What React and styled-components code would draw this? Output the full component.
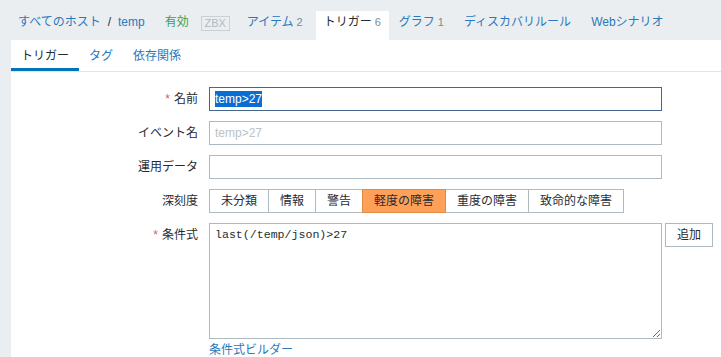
import styled, { createGlobalStyle } from "styled-components";

const GlobalStyle = createGlobalStyle`
    body {
        margin: 0;
        background: #ebeef0;
        font-family: "Liberation Sans", "Noto Sans CJK JP", sans-serif;
        font-size: 12px;
        color: #1f2c33;
    }
`
const Page = styled.div`
    width: 721px;
    height: 357px;
    overflow: hidden;
`
const TopNav = styled.nav`
    display: flex;
    align-items: flex-start;
    height: 40px;
    padding: 11px 0 0 8px;
    box-sizing: border-box;
`
const NavItem = styled.div`
    display: flex;
    align-items: baseline;
    height: 29px;
    box-sizing: border-box;
    padding: 4px ${p => (p.$active ? "8px" : "10px")} 0;
    margin-left: ${p => (p.$active ? "3px" : "0")};
    line-height: 14px;
    white-space: nowrap;
    background: ${p => (p.$active ? "#ffffff" : "transparent")};
    color: ${p => (p.$active ? "#1f2c33" : "#2a78be")};
`
const Sep = styled.span`
    color: #1f2c33;
    margin: 0 7px;
`
const Status = styled.span`
    color: #429e47;
`
const Badge = styled.span`
    display: inline-block;
    margin: 5px 7px 0 2px;
    width: 29px;
    height: 15px;
    box-sizing: border-box;
    border: 1px solid #c9d1d5;
    color: #aebbc2;
    font-size: 11px;
    line-height: 13px;
    text-align: center;
`
const Count = styled.span`
    color: #768d99;
    font-size: 11px;
    margin-left: 3px;
`
const Panel = styled.div`
    margin-left: 11px;
    background: #ffffff;
    height: 317px;
`
const TabBar = styled.div`
    display: flex;
    border-bottom: 1px solid #dfe4e7;
`
const Tab = styled.div`
    height: 31px;
    box-sizing: border-box;
    padding: 5px 10px 0;
    line-height: 23px;
    border-bottom: 3px solid ${p => (p.$active ? "#0275b8" : "transparent")};
    color: ${p => (p.$active ? "#1f2c33" : "#2a78be")};
`
const Form = styled.div`
    display: grid;
    grid-template-columns: 187px 453px auto;
    column-gap: 11px;
    row-gap: 10px;
    padding-top: 15px;
    align-items: start;
`
const Label = styled.div`
    text-align: right;
    line-height: 24px;
    white-space: nowrap;
`
const Req = styled.span`
    color: #e45959;
    margin-right: 4px;
`
const Field = styled.div`
    grid-column: 2;
    height: 24px;
    box-sizing: border-box;
    border: 1px solid ${p => (p.$focused ? "#46668f" : "#acbbc2")};
    padding: 0 5px;
    line-height: 22px;
    color: ${p => (p.$placeholder ? "#b9c3c8" : "#1f2c33")};
`
const Selected = styled.span`
    background: #0a6ed1;
    color: #ffffff;
    padding: 1px 0;
`
const SeverityGroup = styled.div`
    display: flex;
    grid-column: 2 / 4;
`
const SevButton = styled.div`
    height: 24px;
    box-sizing: border-box;
    padding: 0 11px;
    margin-left: -1px;
    line-height: 22px;
    border: 1px solid ${p => (p.$selected ? "#e08a45" : "#acbbc2")};
    background: ${p => (p.$selected ? "#ffa059" : "#ffffff")};
    position: relative;
    z-index: ${p => (p.$selected ? 1 : 0)};
    &:first-child { margin-left: 0; }
`
const ExprCell = styled.div`
    display: flex;
    flex-direction: column;
`
const Expr = styled.textarea`
    width: 453px;
    height: 116px;
    box-sizing: border-box;
    border: 1px solid #acbbc2;
    padding: 4px 5px;
    margin: 0;
    font-family: "Liberation Mono", monospace;
    font-size: 11.6px;
    line-height: 14px;
    color: #1f2c33;
    resize: vertical;
    outline: none;
`
const Link = styled.span`
    color: #2a78be;
    margin-top: 3px;
    line-height: 16px;
`
const AddButton = styled.div`
    justify-self: start;
    margin-left: -8px;
    height: 24px;
    box-sizing: border-box;
    padding: 0 11px;
    border: 1px solid #acbbc2;
    line-height: 22px;
    background: #ffffff;
`

const severities = ["未分類", "情報", "警告", "軽度の障害", "重度の障害", "致命的な障害"]

function App() {
    return (
        <Page>
            <GlobalStyle />
            <TopNav>
                <NavItem>
                    すべてのホスト<Sep>/</Sep>temp
                </NavItem>
                <NavItem><Status>有効</Status></NavItem>
                <Badge>ZBX</Badge>
                <NavItem>アイテム<Count>2</Count></NavItem>
                <NavItem $active>トリガー<Count>6</Count></NavItem>
                <NavItem>グラフ<Count>1</Count></NavItem>
                <NavItem>ディスカバリルール</NavItem>
                <NavItem>Webシナリオ</NavItem>
            </TopNav>
            <Panel>
                <TabBar>
                    <Tab $active>トリガー</Tab>
                    <Tab>タグ</Tab>
                    <Tab>依存関係</Tab>
                </TabBar>
                <Form>
                    <Label><Req>*</Req>名前</Label>
                    <Field $focused><Selected>temp&gt;27</Selected></Field>
                    <span />

                    <Label>イベント名</Label>
                    <Field $placeholder>temp&gt;27</Field>
                    <span />

                    <Label>運用データ</Label>
                    <Field />
                    <span />

                    <Label>深刻度</Label>
                    <SeverityGroup>
                        {severities.map((s, i) => (
                            <SevButton key={s} $selected={i === 3}>{s}</SevButton>
                        ))}
                    </SeverityGroup>

                    <Label><Req>*</Req>条件式</Label>
                    <ExprCell>
                        <Expr defaultValue="last(/temp/json)>27" spellCheck={false} />
                        <Link>条件式ビルダー</Link>
                    </ExprCell>
                    <AddButton>追加</AddButton>
                </Form>
            </Panel>
        </Page>
    )
}

export default App
